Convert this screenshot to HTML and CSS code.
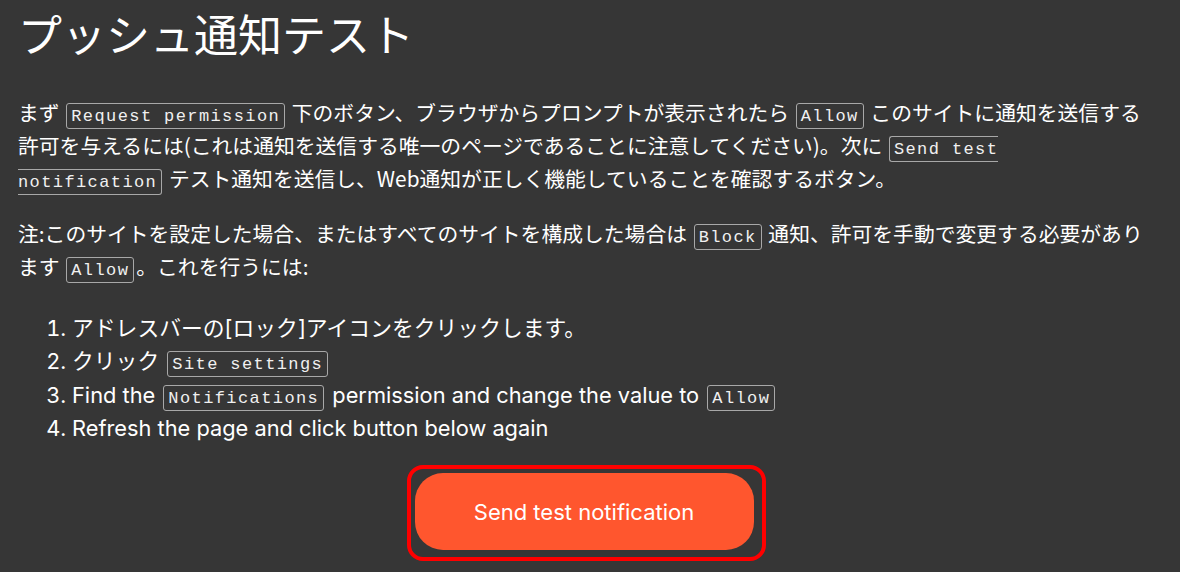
FILE: index.html
```html
<!DOCTYPE html>
<html lang="ja">
<head>
  <meta charset="UTF-8">
  <meta name="viewport" content="width=device-width, initial-scale=1.0">
  <title>プッシュ通知テスト</title>
  <link rel="stylesheet" href="styles.css">
</head>
<body>
  <main class="page">
    <h1 class="title">プッシュ通知テスト</h1>

    <p class="text">まず <kbd>Request permission</kbd> 下のボタン、ブラウザからプロンプトが表示されたら <kbd>Allow</kbd> このサイトに通知を送信する許可を与えるには(これは通知を送信する唯一のページであることに注意してください)。次に <kbd>Send test notification</kbd> テスト通知を送信し、Web通知が正しく機能していることを確認するボタン。</p>

    <p class="text">注:このサイトを設定した場合、またはすべてのサイトを構成した場合は <kbd>Block</kbd> 通知、許可を手動で変更する必要があります <kbd>Allow</kbd>。これを行うには:</p>

    <ol class="steps">
      <li>アドレスバーの[ロック]アイコンをクリックします。</li>
      <li>クリック <kbd>Site settings</kbd></li>
      <li>Find the <kbd>Notifications</kbd> permission and change the value to <kbd>Allow</kbd></li>
      <li>Refresh the page and click button below again</li>
    </ol>

    <div class="action">
      <div class="highlight">
        <button class="send-btn" type="button">Send test notification</button>
      </div>
    </div>
  </main>
</body>
</html>
```

FILE: styles.css
```css
body {
  margin: 0;
  background: #363636;
  color: #ffffff;
  font-family: "Noto Sans CJK JP", "Noto Sans", sans-serif;
}
.page {
  padding: 0 18px;
}
.title {
  margin: 7px 0 36px;
  font-size: 44px;
  font-weight: 400;
  line-height: 1.2;
}
.text {
  margin: 0 0 22px;
  padding-right: 16px;
  font-size: 20.8px;
  line-height: 33px;
}
kbd {
  margin: 0 2px;
  padding: 3px 4px 2px;
  border: 1px solid #a8a8a8;
  border-radius: 3px;
  font-family: "Liberation Mono", monospace;
  font-size: 17px;
  line-height: 1;
  letter-spacing: 1.4px;
  color: #f0f0f0;
}
.steps {
  margin: 29px 0 20px;
  padding-left: 54px;
  font-family: Inter, "Noto Sans CJK JP", sans-serif;
  font-size: 21.8px;
  line-height: 33.4px;
}
.action {
  display: flex;
  justify-content: center;
}
.highlight {
  margin-right: 8px;
  padding: 4px 8px 7px 4px;
  border: 4px solid #ff0000;
  border-radius: 16px;
}
.send-btn {
  display: block;
  width: 339px;
  height: 77px;
  border: none;
  border-radius: 28px;
  background: #ff562e;
  color: #ffffff;
  font-family: Inter, sans-serif;
  font-size: 22px;
  cursor: pointer;
}
```
